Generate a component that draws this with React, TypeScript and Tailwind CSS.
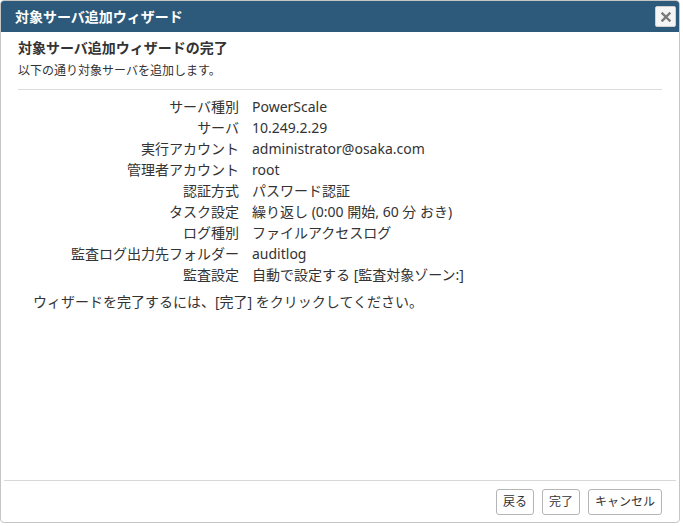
const rows: [string, string][] = [
  ["サーバ種別", "PowerScale"],
  ["サーバ", "10.249.2.29"],
  ["実行アカウント", "administrator@osaka.com"],
  ["管理者アカウント", "root"],
  ["認証方式", "パスワード認証"],
  ["タスク設定", "繰り返し (0:00 開始, 60 分 おき)"],
  ["ログ種別", "ファイルアクセスログ"],
  ["監査ログ出力先フォルダー", "auditlog"],
  ["監査設定", "自動で設定する [監査対象ゾーン:]"],
];

function Btn({ children }: { children: React.ReactNode }) {
  return (
    <button className="h-[26px] px-[6px] border border-[#b5b5b5] rounded-[3px] bg-white text-[12px] text-[#333] leading-none">
      {children}
    </button>
  );
}

export default function App() {
  return (
    <div
      className="w-[683px] h-[526px] bg-white"
      style={{ fontFamily: '"Noto Sans", "Noto Sans CJK JP", sans-serif' }}
    >
      <div className="w-[680px] h-[523px] border border-[#c5c5c5] rounded-[4px] flex flex-col overflow-hidden">
        <div className="h-[31px] bg-[#2d5a7b] flex items-center justify-between pl-[14px] pr-[3px]">
          <span className="text-white text-[14px] font-bold">対象サーバ追加ウィザード</span>
          <div className="w-[21px] h-[21px] bg-[#f5f5f5] border border-[#d0d0d0] rounded-[2px] flex items-center justify-center">
            <svg width="10" height="10" viewBox="0 0 10 10">
              <path d="M1.5 1.5 L8.5 8.5 M8.5 1.5 L1.5 8.5" stroke="#7a7a7a" strokeWidth="2.4" strokeLinecap="square" />
            </svg>
          </div>
        </div>

        <div className="flex-1 px-[17px] text-[#333]">
          <h1 className="mt-[6px] text-[14px] leading-[20px] font-bold">対象サーバ追加ウィザードの完了</h1>
          <p className="mt-[4px] text-[12px] leading-[18px]">以下の通り対象サーバを追加します。</p>
          <div className="mt-[9px] border-t border-[#dcdcdc]" />
          <div className="mt-[6px] grid grid-cols-[221px_1fr] gap-x-[13px] text-[14px] leading-[21px]">
            {rows.map(([k, v]) => (
              <div key={k} className="contents">
                <div className="text-right">{k}</div>
                <div>{v}</div>
              </div>
            ))}
          </div>
          <p className="mt-[6px] ml-[15px] text-[14px] leading-[21px]">
            ウィザードを完了するには、[完了] をクリックしてください。
          </p>
        </div>

        <div className="mx-[3px] border-t border-[#d8d8d8] h-[42px] flex items-start justify-end gap-[8px] pt-[8px] pr-[14px]">
          <Btn>戻る</Btn>
          <Btn>完了</Btn>
          <Btn>キャンセル</Btn>
        </div>
      </div>
    </div>
  );
}
